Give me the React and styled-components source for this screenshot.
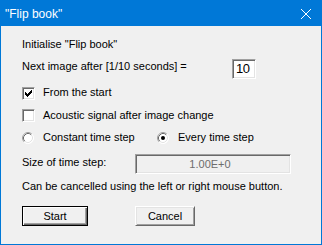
import React from "react";
import styled, { createGlobalStyle } from "styled-components";

const GlobalStyle = createGlobalStyle`
  html, body { margin: 0; padding: 0; background: #f0f0f0; }
  body { font-family: "Liberation Sans", Arial, sans-serif; font-size: 11px; color: #000; }
`;

const Window = styled.div`
  width: 322px;
  height: 245px;
  box-sizing: border-box;
  border: 1px solid #0078d7;
  background: #f0f0f0;
  display: flex;
  flex-direction: column;
`;

const TitleBar = styled.div`
  height: 25px;
  background: #0078d7;
  color: #fff;
  display: flex;
  align-items: center;
  justify-content: space-between;
  padding: 0 10px 0 4px;
  font-size: 12px;
  line-height: 14px;
`;

const Body = styled.div`
  display: flex;
  flex-direction: column;
  padding: 12px 0 0 21px;
`;

const Text = styled.div`
  line-height: 13px;
  height: 13px;
  white-space: nowrap;
  margin-top: ${(p) => p.$mt || 0}px;
  padding-top: ${(p) => p.$pt || 0}px;
`;

const Row = styled.div`
  display: flex;
  align-items: flex-start;
  height: ${(p) => p.$h}px;
  margin-top: ${(p) => p.$mt}px;
`;

const Label = styled.div`
  width: ${(p) => p.$w}px;
  line-height: 13px;
  padding-top: ${(p) => p.$pt || 0}px;
  white-space: nowrap;
`;

const sunken = `
  box-sizing: border-box;
  border: 1px solid;
  border-color: #a0a0a0 #ffffff #ffffff #a0a0a0;
  box-shadow: inset 1px 1px 0 #696969, inset -1px -1px 0 #e3e3e3;
`;

const NumberBox = styled.div`
  ${sunken}
  width: 24px;
  height: 20px;
  background: #fff;
  font-size: 13px;
  letter-spacing: -0.6px;
  line-height: 18px;
  padding-left: 3px;
`;

const Field = styled.div`
  ${sunken}
  width: 156px;
  height: 20px;
  background: #f0f0f0;
  color: #6d6d6d;
  text-align: center;
  line-height: 18px;
  padding-right: 6px;
`;

const CheckBox = styled.div`
  ${sunken}
  width: 13px;
  height: 13px;
  background: #fff;
  margin-top: 1px;
  margin-right: 8px;
  display: flex;
  align-items: center;
  justify-content: center;
`;

const Option = styled.div`
  display: flex;
  align-items: flex-start;
`;

const RadioGrid = styled.div`
  display: grid;
  grid-template-columns: 135px auto;
  height: 14px;
  margin-top: 9px;
`;

const RadioIcon = styled.svg`
  width: 12px;
  height: 12px;
  margin-top: 1px;
  margin-right: 9px;
  flex: none;
`;

const ButtonRow = styled.div`
  display: flex;
  gap: 47px;
  margin-top: 13px;
`;

const Button = styled.div`
  box-sizing: border-box;
  width: ${(p) => p.$w}px;
  height: 20px;
  background: #f0f0f0;
  text-align: center;
  line-height: 18px;
  border: 1px solid;
  border-color: ${(p) => (p.$default ? "#000" : "#fff #696969 #696969 #fff")};
  box-shadow: ${(p) =>
    p.$default
      ? "inset 1px 1px 0 #fff, inset -1px -1px 0 #696969, inset -2px -2px 0 #a0a0a0"
      : "inset 1px 1px 0 #e3e3e3, inset -1px -1px 0 #a0a0a0"};
`;

const Check = () => (
  <svg width="7" height="7" viewBox="0 0 7 7" shapeRendering="crispEdges">
    <g fill="#000">
      <rect x="6" y="0" width="1" height="1" />
      <rect x="5" y="1" width="2" height="1" />
      <rect x="0" y="2" width="1" height="1" />
      <rect x="4" y="2" width="3" height="1" />
      <rect x="0" y="3" width="2" height="1" />
      <rect x="3" y="3" width="3" height="1" />
      <rect x="0" y="4" width="5" height="1" />
      <rect x="1" y="5" width="3" height="1" />
      <rect x="2" y="6" width="1" height="1" />
    </g>
  </svg>
);

const Radio = ({ checked }) => (
  <RadioIcon viewBox="0 0 12 12">
    <circle cx="6" cy="6" r="5.5" fill="#fff" />
    <path d="M2.11 9.89 A5.5 5.5 0 0 1 9.89 2.11" fill="none" stroke="#a0a0a0" strokeWidth="1" />
    <path d="M2.82 9.18 A4.5 4.5 0 0 1 9.18 2.82" fill="none" stroke="#696969" strokeWidth="1" />
    <path d="M9.89 2.11 A5.5 5.5 0 0 1 2.11 9.89" fill="none" stroke="#ffffff" strokeWidth="1" />
    <path d="M9.18 2.82 A4.5 4.5 0 0 1 2.82 9.18" fill="none" stroke="#e3e3e3" strokeWidth="1" />
    {checked && <circle cx="6" cy="6" r="2" fill="#000" />}
  </RadioIcon>
);

const CloseIcon = () => (
  <svg width="10" height="10" viewBox="0 0 10 10">
    <path d="M0 0 L10 10 M10 0 L0 10" stroke="#fff" strokeWidth="1" />
  </svg>
);

export default function App() {
  return (
    <>
      <GlobalStyle />
      <Window>
        <TitleBar>
          <span>"Flip book"</span>
          <CloseIcon />
        </TitleBar>
        <Body>
          <Text>Initialise "Flip book"</Text>
          <Row $h={20} $mt={8}>
            <Label $w={210} $pt={1}>Next image after [1/10 seconds] =</Label>
            <NumberBox>10</NumberBox>
          </Row>
          <Row $h={14} $mt={7}>
            <CheckBox><Check /></CheckBox>
            <Label>From the start</Label>
          </Row>
          <Row $h={14} $mt={8}>
            <CheckBox />
            <Label $pt={1}>Acoustic signal after image change</Label>
          </Row>
          <RadioGrid>
            <Option>
              <Radio />
              <Label>Constant time step</Label>
            </Option>
            <Option>
              <Radio checked />
              <Label>Every time step</Label>
            </Option>
          </RadioGrid>
          <Row $h={20} $mt={9}>
            <Label $w={113} $pt={2}>Size of time step:</Label>
            <Field>1.00E+0</Field>
          </Row>
          <Text $mt={6}>Can be cancelled using the left or right mouse button.</Text>
          <ButtonRow>
            <Button $w={66} $default>Start</Button>
            <Button $w={60}>Cancel</Button>
          </ButtonRow>
        </Body>
      </Window>
    </>
  );
}
